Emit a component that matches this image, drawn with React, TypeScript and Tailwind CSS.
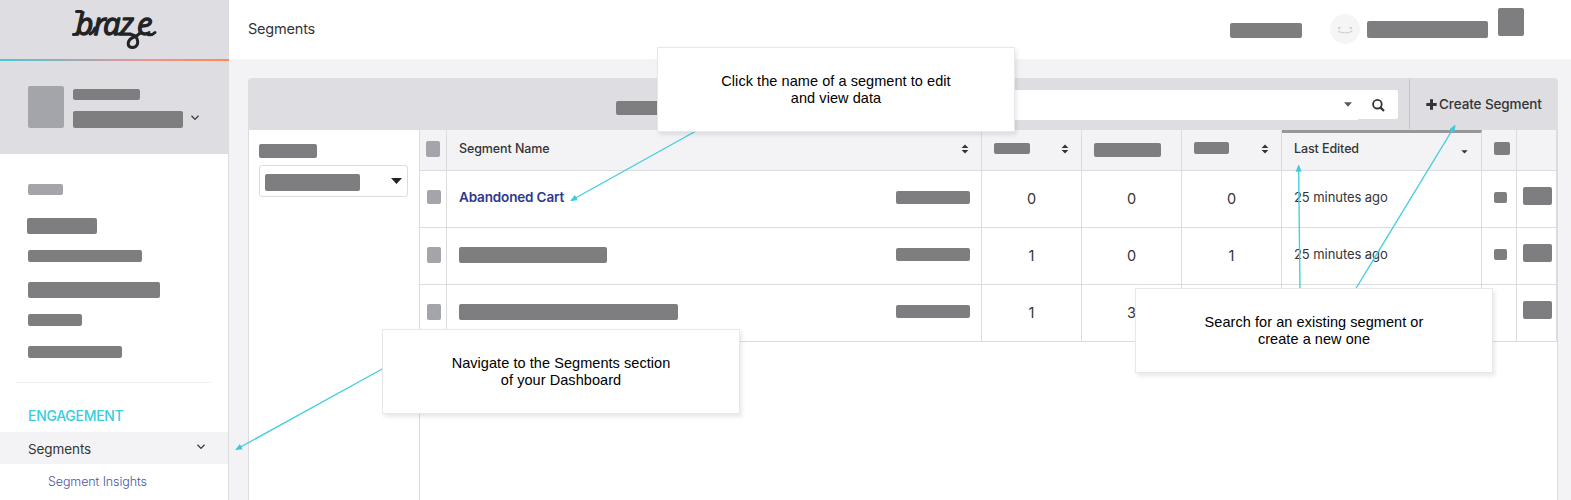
import React from "react";

function Bar({ className }: { className: string }) {
  return <div className={`shrink-0 rounded-[2px] ${className}`} />;
}

function Chevron({ className }: { className: string }) {
  return (
    <svg viewBox="0 0 8 6" className={`h-[6px] w-[8px] shrink-0 ${className}`} fill="none" stroke="#3a3a3c" strokeWidth="1.3">
      <path d="M0.5 0.8 L4 4.4 L7.5 0.8" />
    </svg>
  );
}

function SortIcon({ className = "" }: { className?: string }) {
  return (
    <svg viewBox="0 0 8 10" className={`h-[10px] w-[8px] shrink-0 ${className}`} fill="#333436">
      <path d="M0.6 4 L4 0.4 L7.4 4 Z M0.6 6 L4 9.6 L7.4 6 Z" />
    </svg>
  );
}

function Logo() {
  return (
    <svg viewBox="0 0 90 46" className="h-[46px] w-[90px] overflow-visible" fill="none" stroke="#232325" strokeWidth="3" strokeLinecap="round">
      <text
        x="4.5 22.5 32 49 66"
        y="28"
        fontSize="31"
        fill="#232325"
        strokeWidth="1.3"
        strokeLinejoin="round"
        className="font-['Open_Sans',sans-serif] italic"
      >
        braze
      </text>
      <path d="M60.5 27.5 C68 29 69 40 62 40.5 C55 41 56 32.5 63 30 C66 29 67 28.5 69 26" />
      <path d="M2.5 27.5 C5 28 7 26 8.5 23" />
      <path d="M5.5 4.5 H10.5" />
      <path d="M19 27 C21.5 26 23 24 24 21" />
      <path d="M77 27.5 C80 28.5 82 27.5 84 25.5" />
      <path d="M47 27 C49 27.5 50 26.5 51 25.5" />
    </svg>
  );
}

function Sidebar() {
  return (
    <aside className="flex h-[500px] w-[229px] shrink-0 flex-col">
      <div className="flex h-[59px] shrink-0 items-start bg-[#dedde2] pl-[71px] pt-[7px]">
        <Logo />
      </div>
      <div className="h-[2px] shrink-0 bg-[linear-gradient(90deg,#45c8da_0%,#f3908c_65%,#fd8b50_100%)]" />
      <div className="flex h-[93px] shrink-0 items-start bg-[#dedde2] pl-7 pt-[25px]">
        <Bar className="h-[42px] w-[36px] bg-[#a4a5aa]" />
        <div className="ml-[9px] flex flex-col gap-[11px] pt-[3px]">
          <Bar className="h-[11px] w-[67px] bg-[#7e7e80]" />
          <Bar className="h-[17px] w-[110px] bg-[#7e7e80]" />
        </div>
        <Chevron className="ml-[8px] mt-[29px]" />
      </div>
      <div className="flex min-h-0 flex-1 flex-col border-r border-[#dcdce1] bg-white">
        <Bar className="ml-7 mt-[30px] h-[11px] w-[35px] bg-[#a4a5aa]" />
        <Bar className="ml-[27px] mt-[23px] h-[16px] w-[70px] bg-[#7e7e80]" />
        <Bar className="ml-7 mt-4 h-[12px] w-[114px] bg-[#7e7e80]" />
        <Bar className="ml-7 mt-5 h-[16px] w-[132px] bg-[#7e7e80]" />
        <Bar className="ml-7 mt-4 h-[12px] w-[54px] bg-[#7e7e80]" />
        <Bar className="ml-7 mt-5 h-[12px] w-[94px] bg-[#7e7e80]" />
        <div className="ml-[15px] mt-6 h-px w-[196px] shrink-0 bg-[#f1f1f4]" />
        <div className="mt-[23px] h-[20px] shrink-0 pl-7 text-[14px] font-medium leading-[20px] tracking-[-0.3px] text-[#3accdd]">
          ENGAGEMENT
        </div>
        <div className="mt-[6px] flex h-[32px] shrink-0 items-center justify-between bg-[#f3f3f5] pl-7 pr-[23px]">
          <span className="pt-[2px] text-[13.5px] leading-[20px] tracking-[-0.1px] text-[#333436]">Segments</span>
          <Chevron className="-mt-[2px]" />
        </div>
        <div className="mt-[8px] h-[20px] shrink-0 pl-12 text-[12.5px] font-light leading-[20px] tracking-[-0.1px] text-[#4a55a5]">
          Segment Insights
        </div>
      </div>
    </aside>
  );
}

function TopBar() {
  return (
    <header className="flex h-[59px] shrink-0 items-start bg-white pl-[19px]">
      <h1 className="mt-[19px] text-[14.5px] leading-[20px] tracking-[-0.2px] text-[#333436]">Segments</h1>
      <div className="ml-auto mr-[47px] flex items-start">
        <Bar className="mt-[23px] h-[15px] w-[72px] bg-[#7e7e80]" />
        <svg viewBox="0 0 30 30" className="ml-[28px] mt-[14px] h-[30px] w-[30px]" fill="none">
          <circle cx="15" cy="15" r="15" fill="#f5f5f5" />
          <circle cx="9.3" cy="14" r="1.2" fill="#cfcfcf" />
          <circle cx="20.7" cy="14" r="1.2" fill="#cfcfcf" />
          <path d="M8 16.5 Q9 18.8 15 18.8 Q21 18.8 22 16.5" stroke="#d2d2d2" strokeWidth="1.1" />
        </svg>
        <Bar className="ml-[7px] mt-[21px] h-[17px] w-[121px] bg-[#7e7e80]" />
        <Bar className="ml-[10px] mt-[8px] h-[28px] w-[26px] bg-[#7e7e80]" />
      </div>
    </header>
  );
}

function Toolbar() {
  return (
    <div className="flex h-[52px] shrink-0 items-start bg-[#dedde2] pl-[368px]">
      <Bar className="mt-[23px] h-[14px] w-[80px] bg-[#7e7e80]" />
      <div className="ml-[40px] mt-[12px] flex h-[30px] flex-1 items-start justify-end rounded-l-[2px] bg-white pr-[6px] pt-[12px]">
        <svg viewBox="0 0 8 5" className="h-[5px] w-[8px]" fill="#58595b">
          <path d="M0 0.3 H8 L4 4.8 Z" />
        </svg>
      </div>
      <div className="mt-[12px] flex h-[29px] w-[40px] items-start rounded-r-[2px] bg-white pl-[14px] pt-[9px]">
        <svg viewBox="0 0 13 13" className="h-[13px] w-[13px]" fill="none" stroke="#333436" strokeWidth="1.8">
          <circle cx="5.4" cy="5.2" r="4.3" />
          <path d="M8.4 8.4 L12 12" strokeWidth="2.2" />
        </svg>
      </div>
      <div className="ml-[11px] mt-px flex h-[50px] w-[149px] shrink-0 items-start border-l border-[#c4c4ca] pl-[16px]">
        <svg viewBox="0 0 11 11" className="mt-[20px] h-[11px] w-[11px]" fill="#333436">
          <path d="M4 0.3 H7 V4 H10.7 V7 H7 V10.7 H4 V7 H0.3 V4 H4 Z" />
        </svg>
        <span className="ml-[2px] mt-[15px] whitespace-nowrap text-[13.5px] font-medium leading-[20px] tracking-[-0.1px] text-[#333436]">
          Create Segment
        </span>
      </div>
    </div>
  );
}

function HeaderRow() {
  return (
    <div className="grid h-[41px] grid-cols-[27px_535px_100px_100px_100px_200px_35px_40px] border-b border-[#dcdce0] bg-[#f3f3f5] *:border-r *:border-[#dcdce0]">
      <div className="pl-[6px] pt-[11px]">
        <Bar className="h-[16px] w-[14px] bg-[#a4a5aa]" />
      </div>
      <div className="flex items-start justify-between pl-3 pr-[12px]">
        <span className="pt-[9px] text-[12.5px] font-medium leading-[20px] tracking-[-0.1px] text-[#333436]">Segment Name</span>
        <SortIcon className="mt-[14px]" />
      </div>
      <div className="flex items-start justify-between pl-3 pr-[12px]">
        <Bar className="mt-[13px] h-[11px] w-[36px] bg-[#7e7e80]" />
        <SortIcon className="mt-[14px]" />
      </div>
      <div className="pl-3 pt-[13px]">
        <Bar className="h-[14px] w-[67px] bg-[#7e7e80]" />
      </div>
      <div className="flex items-start justify-between pl-3 pr-[12px]">
        <Bar className="mt-[12px] h-[12px] w-[35px] bg-[#7e7e80]" />
        <SortIcon className="mt-[14px]" />
      </div>
      <div className="flex items-start justify-between border-t-[3px] border-t-[#979798]! pl-3 pr-[13px]">
        <span className="pt-[6px] text-[12.5px] font-medium leading-[20px] tracking-[-0.1px] text-[#333436]">Last Edited</span>
        <svg viewBox="0 0 7 4" className="mt-[17px] h-[4px] w-[7px]" fill="#333436">
          <path d="M0.3 0.3 H6.7 L3.5 3.6 Z" />
        </svg>
      </div>
      <div className="pl-3 pt-[12px]">
        <Bar className="h-[13px] w-[16px] bg-[#7e7e80]" />
      </div>
      <div />
    </div>
  );
}

interface Row {
  name: React.ReactNode;
  check: string;
  counts: string[];
  edited: string;
}

const rows: Row[] = [
  {
    name: (
      <a className="block pt-[16px] text-[13.5px] font-semibold leading-[20px] tracking-[-0.15px] text-[#2b3990]">
        Abandoned Cart
      </a>
    ),
    check: "mt-[19px] h-[14px]",
    counts: ["0", "0", "0"],
    edited: "25 minutes ago",
  },
  {
    name: <Bar className="mt-[19px] h-[16px] w-[148px] bg-[#7e7e80]" />,
    check: "mt-[19px] h-[16px]",
    counts: ["1", "0", "1"],
    edited: "25 minutes ago",
  },
  {
    name: <Bar className="mt-[19px] h-[16px] w-[219px] bg-[#7e7e80]" />,
    check: "mt-[19px] h-[16px]",
    counts: ["1", "3", ""],
    edited: "",
  },
];

function DataRow({ row }: { row: Row }) {
  return (
    <div className="grid h-[57px] grid-cols-[27px_535px_100px_100px_100px_200px_35px_40px] border-b border-[#dcdce0] *:border-r *:border-[#dcdce0]">
      <div className="pl-[7px]">
        <Bar className={`w-[14px] bg-[#a4a5aa] ${row.check}`} />
      </div>
      <div className="flex items-start justify-between pl-3 pr-[11px]">
        {row.name}
        <Bar className="mt-[20px] h-[13px] w-[74px] bg-[#7e7e80]" />
      </div>
      {row.counts.map((count, i) => (
        <div key={i} className="pt-[18px] text-center text-[14.5px] leading-[20px] text-[#333436]">
          {count}
        </div>
      ))}
      <div className="pl-3 pt-[16px] text-[13px] leading-[20px] tracking-[-0.07px] text-[#333436]">{row.edited}</div>
      <div className="pl-3 pt-[21px]">{row.edited && <Bar className="h-[11px] w-[13px] bg-[#7e7e80]" />}</div>
      <div className="pl-[6px] pt-[16px]">
        <Bar className="h-[18px] w-[29px] bg-[#7e7e80]" />
      </div>
    </div>
  );
}

function FilterPanel() {
  return (
    <div className="flex w-[170px] shrink-0 flex-col pl-[10px] pt-[14px]">
      <Bar className="h-[14px] w-[58px] bg-[#7e7e80]" />
      <div className="mt-[7px] flex h-[32px] w-[149px] items-start justify-between rounded-[3px] border border-[#dcdce0] pl-[5px] pr-[5px] pt-[8px]">
        <Bar className="h-[17px] w-[95px] bg-[#7e7e80]" />
        <svg viewBox="0 0 11 6" className="mt-[4px] h-[6px] w-[11px]" fill="#232325">
          <path d="M0 0 H11 L5.5 6 Z" />
        </svg>
      </div>
    </div>
  );
}

function Callout({ className, children }: { className: string; children: React.ReactNode }) {
  return (
    <div
      className={`absolute h-[85px] w-[358px] border border-[#e8e8ea] bg-white pt-[25px] text-center font-['Liberation_Sans',Arial,sans-serif] text-[14.5px] leading-[17px] tracking-[0.06px] text-black shadow-[2px_3px_4px_rgba(0,0,0,0.09)] ${className}`}
    >
      {children}
    </div>
  );
}

export default function App() {
  return (
    <div className="relative flex h-[500px] w-[1571px] overflow-hidden bg-[#f3f3f5] font-['Inter','Noto_Sans',sans-serif]">
      <Sidebar />
      <main className="flex min-w-0 flex-1 flex-col">
        <TopBar />
        <section className="ml-[19px] mt-[19px] flex w-[1310px] flex-1 flex-col overflow-hidden rounded-t-[4px] bg-white">
          <Toolbar />
          <div className="flex min-h-0 flex-1 border-x border-[#dcdce0]">
            <FilterPanel />
            <div className="flex-1 border-l border-[#dcdce0]">
              <HeaderRow />
              {rows.map((row, i) => (
                <DataRow key={i} row={row} />
              ))}
            </div>
          </div>
        </section>
      </main>

      <svg viewBox="0 0 1571 500" className="absolute inset-0 h-[500px] w-[1571px]" stroke="#45cfe0" strokeWidth="1.4" fill="none">
        <defs>
          <marker id="tip" viewBox="0 0 8 8" refX="7" refY="4" markerWidth="7" markerHeight="7" markerUnits="userSpaceOnUse" orient="auto">
            <path d="M0 0.5 L8 4 L0 7.5 Z" fill="#3accdd" stroke="none" />
          </marker>
        </defs>
        <path d="M696 131 L571 200.5" markerEnd="url(#tip)" />
        <path d="M384 368 L236 449.5" markerEnd="url(#tip)" />
        <path d="M1300 290 L1298.6 165.5" markerEnd="url(#tip)" />
        <path d="M1355 290 L1455 125.5" markerEnd="url(#tip)" />
      </svg>

      <Callout className="left-[657px] top-[47px]">
        Click the name of a segment to edit
        <br />
        and view data
      </Callout>
      <Callout className="left-[382px] top-[329px]">
        Navigate to the Segments section
        <br />
        of your Dashboard
      </Callout>
      <Callout className="left-[1135px] top-[288px]">
        Search for an existing segment or
        <br />
        create a new one
      </Callout>
    </div>
  );
}
